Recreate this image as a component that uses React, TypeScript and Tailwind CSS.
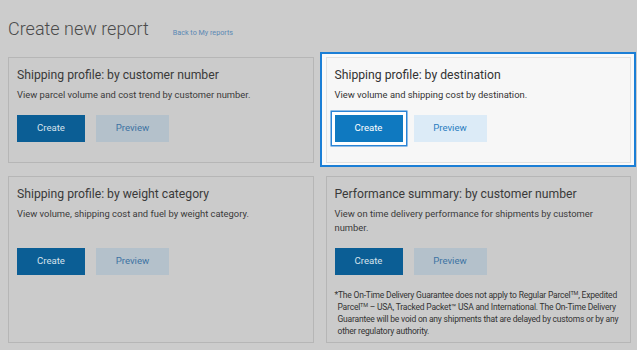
import type * as React from 'react';

type CardProps = {
  title: string;
  description: string;
  active?: boolean;
  tall?: boolean;
  children?: React.ReactNode;
};

const ReportCard: React.FC<CardProps> = ({ title, description, active = false, tall = false, children }) => {
  return (
    <div className="relative">
      {/* Highlight frame around the focused card */}
      {active && (
        <div className="absolute -left-[6px] -top-[5px] -right-[5px] -bottom-[4px] bg-[#fafafa] border-2 border-[#1c7fd6]" />
      )}
      <div
        className={`relative h-full border pl-[8px] pr-[8px] pt-[8px] ${
          active ? 'bg-[#f7f7f7] border-[#e2e2e2] text-[#333333]' : 'bg-[#cbcbcb] border-[#b6b6b6] text-[#3a3a3a]'
        }`}
      >
        <h2 className="text-[12.2px] leading-[18px]">{title}</h2>
        <p className={`mt-[4px] text-[9.4px] leading-[14px] ${tall ? 'min-h-[28px]' : ''}`}>{description}</p>
        <div className="mt-[13px] flex gap-[11px]">
          <button
            className={`w-[68px] h-[27px] text-[9.6px] ${
              active
                ? 'bg-[#0f79c0] text-white shadow-[0_0_0_3px_#ffffff,0_0_0_4.5px_#2a84d6]'
                : 'bg-[#0b5e95] text-[#d6e2ec]'
            }`}
          >
            Create
          </button>
          <button
            className={`w-[73px] h-[27px] text-[9.6px] ${
              active ? 'bg-[#dcebf7] text-[#2a7cc0]' : 'bg-[#b4c1cb] text-[#3d73a3]'
            }`}
          >
            Preview
          </button>
        </div>
        {children}
      </div>
    </div>
  );
};

export default function App() {
  return (
    <div className="w-[637px] h-[350px] overflow-hidden bg-[#cccccc] pl-[8px] pr-[6px] pt-[17px] font-['Roboto',sans-serif]">
      <div className="flex items-baseline gap-[24px] mb-[16px]">
        <h1 className="text-[18px] leading-[24px] font-light text-[#4b4b4b]">Create new report</h1>
        <a className="text-[7.2px] text-[#5a88b4]">Back to My reports</a>
      </div>

      <div className="grid grid-cols-2 grid-rows-[106px_167px] gap-x-[12px] gap-y-[13px]">
        <ReportCard
          title="Shipping profile: by customer number"
          description="View parcel volume and cost trend by customer number."
        />
        <ReportCard
          title="Shipping profile: by destination"
          description="View volume and shipping cost by destination."
          active
        />
        <ReportCard
          title="Shipping profile: by weight category"
          description="View volume, shipping cost and fuel by weight category."
          tall
        />
        <ReportCard
          title="Performance summary: by customer number"
          description="View on time delivery performance for shipments by customer number."
          tall
        >
          <p className="mt-[14px] pl-[3px] -indent-[3px] text-[8.5px] tracking-[-0.2px] leading-[12px] text-[#333333]">
            *The On-Time Delivery Guarantee does not apply to Regular Parcel<sup className="text-[5.5px]">TM</sup>, Expedited
            Parcel<sup className="text-[5.5px]">TM</sup> – USA, Tracked Packet™ USA and International. The On-Time Delivery
            Guarantee will be void on any shipments that are delayed by customs or by any other regulatory authority.
          </p>
        </ReportCard>
      </div>
    </div>
  );
}
